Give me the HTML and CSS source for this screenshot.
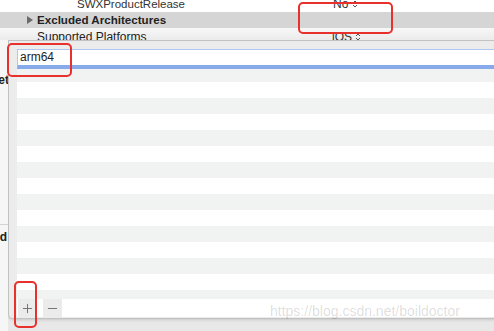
FILE: index.html
```html
<!DOCTYPE html>
<html lang="en">

<head>
    <meta charset="UTF-8">
    <title>Excluded Architectures</title>
    <link rel="stylesheet" href="styles.css">
</head>

<body>
    <div class="screen">
        <!-- build settings rows behind the popover -->
        <div class="settings">
            <div class="row row-first">
                <span class="name sub">SWXProductRelease</span>
                <span class="value">No <svg class="chev" viewBox="0 0 6 10"><path d="M1 4 3 2 5 4M1 6 3 8 5 6" /></svg></span>
            </div>
            <div class="row row-group">
                <span class="disclosure"></span>
                <span class="name">Excluded Architectures</span>
            </div>
            <div class="row row-last">
                <span class="name">Supported Platforms</span>
                <span class="value">iOS <svg class="chev" viewBox="0 0 6 10"><path d="M1 4 3 2 5 4M1 6 3 8 5 6" /></svg></span>
            </div>
        </div>

        <div class="lower">
            <div class="side">
                <div class="side-label first"><b>Target</b></div>
                <div class="side-label second"><b>Build</b></div>
            </div>

            <div class="popover-area">
                <div class="popover">
                    <div class="list-wrap">
                        <div class="list">
                            <div class="field">arm64</div>
                            <div class="item alt short"></div>
                            <div class="item"></div>
                            <div class="item alt"></div>
                            <div class="item"></div>
                            <div class="item alt"></div>
                            <div class="item"></div>
                            <div class="item alt"></div>
                            <div class="item"></div>
                            <div class="item alt"></div>
                            <div class="item"></div>
                            <div class="item alt"></div>
                            <div class="item"></div>
                            <div class="item alt"></div>
                            <div class="item"></div>
                            <div class="item alt"></div>
                        </div>
                        <div class="bar">
                            <button class="btn" title="Add">
                                <svg viewBox="0 0 12 12"><path d="M6 1v10M1 6h10" /></svg>
                            </button>
                            <button class="btn" title="Remove">
                                <svg viewBox="0 0 12 12"><path d="M1 6h10" /></svg>
                            </button>
                        </div>
                    </div>
                </div>
            </div>
        </div>

        <div class="watermark">https://blog.csdn.net/boildoctor</div>

        <!-- red annotation boxes -->
        <div class="mark mark-value"></div>
        <div class="mark mark-field"></div>
        <div class="mark mark-add"></div>
    </div>
</body>

</html>
```

FILE: styles.css
```css
* {
    box-sizing: border-box;
}

body {
    margin: 0;
    font-family: "Liberation Sans", Arial, sans-serif;
    color: #222;
    background: #fff;
}

.screen {
    position: relative;
    width: 494px;
    height: 331px;
    overflow: hidden;
}

/* Settings rows */
.settings {
    height: 40px;
}

.row {
    display: flex;
    overflow: hidden;
    white-space: nowrap;
    position: relative;
}

.row .name {
    font-size: 12px;
    line-height: 16px;
}

.row .value {
    position: absolute;
    left: 333px;
    font-size: 12px;
    line-height: 16px;
    color: #333;
}

.chev {
    width: 6px;
    height: 10px;
    vertical-align: -1px;
    fill: none;
    stroke: #555;
    stroke-width: 1;
}

.row-first {
    height: 12px;
    background: #fff;
}

.row-first .name,
.row-first .value {
    margin-top: -4px;
    top: 0;
}

.name.sub {
    margin-left: 77px;
    font-size: 11.5px;
    color: #333;
}

.row-group {
    height: 16px;
    background: #d5d5d5;
    align-items: center;
}

.row-group .name {
    font-weight: bold;
    font-size: 11.6px;
    margin-left: 4px;
}

.disclosure {
    margin-left: 27px;
    width: 0;
    height: 0;
    border-top: 4px solid transparent;
    border-bottom: 4px solid transparent;
    border-left: 6px solid #6a6a6a;
}

.row-last {
    height: 12px;
    background: linear-gradient(#f7f7f7, #ebebeb);
}

.row-last .name {
    margin-left: 37px;
    margin-top: 1px;
}

.row-last .value {
    left: 332px;
    top: 1px;
}

/* Lower part: cut-off labels and the popover */
.lower {
    display: flex;
    height: 291px;
}

.side {
    width: 8px;
    background: #f6f6f6;
    overflow: hidden;
    position: relative;
}

.side-label {
    display: flex;
    justify-content: flex-end;
    font-size: 12px;
    line-height: 14px;
    white-space: nowrap;
}

.side-label.first {
    margin-top: 33px;
    margin-right: -1px;
}

.side-label.second {
    margin-top: 137px;
    padding-top: 5px;
    padding-right: 1px;
    border-top: 1px solid #d4d4d4;
}

.popover-area {
    flex: 1;
    background: #e8e8e8;
}

.popover {
    height: 279px;
    background: #ececec;
    border: 1px solid #c2c2c2;
    border-right: none;
    border-radius: 0 0 0 5px;
    box-shadow: 0 1px 3px rgba(0, 0, 0, 0.15);
}

.list-wrap {
    padding: 8px 0 0 8px;
}

.list {
    height: 250px;
    overflow: hidden;
    background: #fff;
}

.field {
    height: 20px;
    background: #fff;
    border-top: 1px solid #b0c8ef;
    border-left: 1px solid #b0c8ef;
    border-bottom: 4px solid #86aaea;
    padding-left: 2px;
    font-size: 12px;
    line-height: 15px;
    color: #222;
}

.item {
    height: 16px;
    background: #fff;
}

.item.alt {
    background: #f1f2f2;
}

.item.short {
    height: 13px;
}

.bar {
    display: flex;
    gap: 6px;
    height: 18px;
    background: #fff;
    padding-left: 1px;
}

.btn {
    width: 19px;
    height: 18px;
    padding: 0;
    border: none;
    background: #ebebeb;
    display: flex;
    align-items: center;
    justify-content: center;
}

.btn svg {
    width: 11px;
    height: 11px;
    fill: none;
    stroke: #6a6a6a;
    stroke-width: 1;
}

.watermark {
    position: absolute;
    left: 270px;
    top: 303px;
    font-size: 14px;
    line-height: 16px;
    color: rgba(0, 0, 0, 0.14);
    white-space: nowrap;
}

/* Annotation boxes */
.mark {
    position: absolute;
    border: 2px solid #e8302c;
    border-radius: 5px;
}

.mark-value {
    left: 298px;
    top: 2px;
    width: 95px;
    height: 32px;
}

.mark-field {
    left: 7px;
    top: 43px;
    width: 65px;
    height: 34px;
}

.mark-add {
    left: 14px;
    top: 281px;
    width: 23px;
    height: 47px;
}
```
